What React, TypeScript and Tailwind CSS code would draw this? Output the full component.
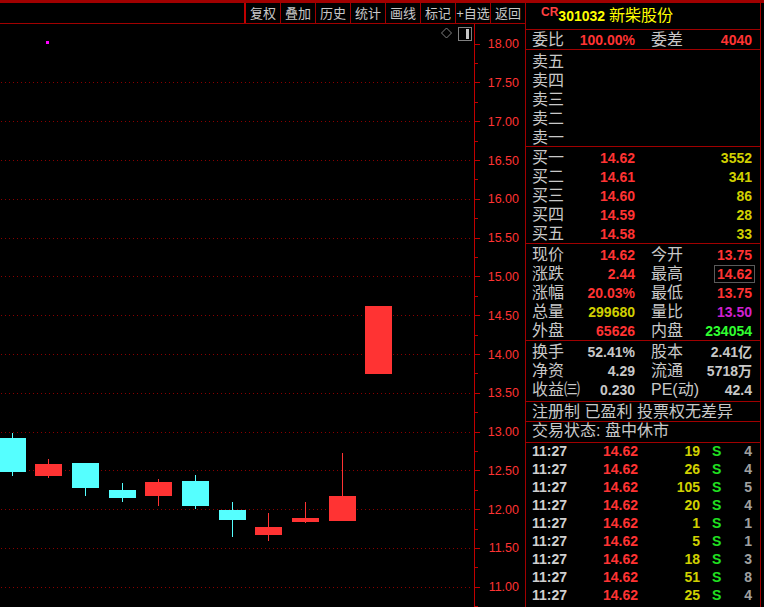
import React from "react"

const tools = ["复权", "叠加", "历史", "统计", "画线", "标记", "+自选", "返回"]

// page y of a price on the right axis
const py = (p: number) => 43.7 + (18 - p) * 77.58 - 24

const labels = Array.from({ length: 15 }, (_, i) => 18 - i * 0.5)
const minors = Array.from({ length: 15 }, (_, i) => 17.75 - i * 0.5)

// [x, bodyTop, bodyBottom, wickTop, wickBottom, up]
const candles: [number, number, number, number, number, boolean][] = [
  [-1, 438, 472, 433, 476, false],
  [35, 464, 476, 459, 478, true],
  [72, 463, 488, 463, 496, false],
  [109, 490, 498, 483, 502, false],
  [145, 482, 496, 479, 506, true],
  [182, 481, 506, 475, 509, false],
  [219, 510, 520, 502, 537, false],
  [255, 527, 535, 513, 541, true],
  [292, 518, 522, 502, 523, true],
  [329, 496, 521, 453, 521, true],
  [365, 306, 374, 306, 374, true],
]

const trades = [
  ["19", "4"],
  ["26", "4"],
  ["105", "5"],
  ["20", "4"],
  ["1", "1"],
  ["5", "1"],
  ["18", "3"],
  ["51", "8"],
  ["25", "4"],
]

function Chart() {
  return (
    <svg width={525} height={583} className="block">
      {labels.slice(1).map((p) => (
        <line
          key={p}
          x1={1}
          x2={473}
          y1={Math.round(py(p)) + 0.5}
          y2={Math.round(py(p)) + 0.5}
          stroke="#8a0000"
          strokeDasharray="1 3"
        />
      ))}
      <rect x={46} y={17} width={3} height={3} fill="#ff00ff" />
      {candles.map(([x, bt, bb, wt, wb, up], i) => {
        const c = up ? "#ff3333" : "#55ffff"
        return (
          <g key={i}>
            <rect x={x + 13} y={wt - 24} width={1} height={wb - wt} fill={c} />
            <rect x={x} y={bt - 24} width={27} height={bb - bt} fill={c} />
          </g>
        )
      })}
      {/* icons */}
      <path d="M446.5 4 L451.5 9 L446.5 14 L441.5 9 Z" fill="none" stroke="#808080" />
      <rect x={458.5} y={3.5} width={13} height={13} fill="none" stroke="#808080" />
      <rect x={466} y={5} width={3} height={10} fill="#c8c8c8" />
      {/* axis */}
      <rect x={474} y={0} width={1} height={583} fill="#c00000" />
      {labels.map((p) => (
        <g key={p}>
          <rect x={475} y={Math.round(py(p))} width={5} height={1} fill="#c00000" />
          <text
            x={519}
            y={py(p) + 4.5}
            textAnchor="end"
            fontFamily="Liberation Sans"
            fontSize={12.5}
            fill="#ff3333"
          >
            {p.toFixed(2)}
          </text>
        </g>
      ))}
      {minors.map((p) => (
        <rect key={p} x={475} y={Math.round(py(p))} width={3} height={1} fill="#c00000" />
      ))}
    </svg>
  )
}

function Pair({
  l1,
  v1,
  c1,
  l2,
  v2,
  c2,
  boxed,
}: {
  l1: string
  v1: string
  c1: string
  l2: string
  v2: string
  c2: string
  boxed?: boolean
}) {
  return (
    <div className="flex h-[19px] items-center">
      <div className="flex w-[109px] items-center justify-between pl-[6px]">
        <span className="text-[16px] text-[#c8c8c8]">{l1}</span>
        <span className={`text-[14px] font-bold ${c1}`}>{v1}</span>
      </div>
      <div className="ml-[16px] flex w-[101px] items-center justify-between">
        <span className="text-[16px] text-[#c8c8c8]">{l2}</span>
        {boxed ? (
          <span className={`-mr-[3px] border border-[#5a5a5a] px-[2px] text-[14px] leading-[16px] font-bold ${c2}`}>{v2}</span>
        ) : (
          <span className={`text-[14px] font-bold ${c2}`}>{v2}</span>
        )}
      </div>
    </div>
  )
}

function Book({ label, price, vol }: { label: string; price?: string; vol?: string }) {
  return (
    <div className="flex h-[19px] items-center">
      <div className="flex w-[109px] items-center justify-between pl-[6px]">
        <span className="text-[16px] text-[#c8c8c8]">{label}</span>
        <span className="text-[14px] font-bold text-[#ff3333]">{price}</span>
      </div>
      <span className="w-[117px] text-right text-[14px] font-bold text-[#d0d000]">{vol}</span>
    </div>
  )
}

export default function App() {
  return (
    <div className="relative h-[607px] w-[764px] overflow-hidden bg-black font-['Liberation_Sans','Noto_Sans_CJK_SC',sans-serif] leading-none">
      <div className="h-[3px] bg-[#a00000]" />
      <div className="flex">
        {/* chart side */}
        <div className="w-[525px]">
          <div className="flex h-[21px] justify-end border-b border-[#a00000]">
            <div className="flex w-[281px] border-l-2 border-[#c00000]">
              {tools.map((t, i) => (
                <div
                  key={t}
                  className={`flex flex-1 items-center justify-center text-[13px] text-[#c8c8c8] ${i < tools.length - 1 ? "border-r border-[#a00000]" : ""}`}
                >
                  {t}
                </div>
              ))}
            </div>
          </div>
          <Chart />
        </div>

        {/* quote panel */}
        <div className="h-[604px] w-[236px] border-x border-[#a00000]">
          <div className="flex h-[27px] items-center border-b border-[#a00000] pl-[15px]">
            <span className="-mt-[8px] text-[12px] font-bold text-[#ff4040]">CR</span>
            <span className="text-[14px] font-bold text-[#ffff00]">301032</span>
            <span className="ml-[4px] text-[16px] text-[#ffff00]">新柴股份</span>
          </div>
          <div className="flex h-[20px] items-center border-b border-[#a00000]">
            <Pair l1="委比" v1="100.00%" c1="text-[#ff3333]" l2="委差" v2="4040" c2="text-[#ff3333]" />
          </div>
          <div className="h-[97px] border-b border-[#a00000] pt-[2px]">
            {["卖五", "卖四", "卖三", "卖二", "卖一"].map((l) => (
              <Book key={l} label={l} />
            ))}
          </div>
          <div className="h-[97px] border-b border-[#a00000] pt-[1px]">
            <Book label="买一" price="14.62" vol="3552" />
            <Book label="买二" price="14.61" vol="341" />
            <Book label="买三" price="14.60" vol="86" />
            <Book label="买四" price="14.59" vol="28" />
            <Book label="买五" price="14.58" vol="33" />
          </div>
          <div className="h-[97px] border-b border-[#a00000] pt-[1px]">
            <Pair l1="现价" v1="14.62" c1="text-[#ff3333]" l2="今开" v2="13.75" c2="text-[#ff3333]" />
            <Pair l1="涨跌" v1="2.44" c1="text-[#ff3333]" l2="最高" v2="14.62" c2="text-[#ff3333]" boxed />
            <Pair l1="涨幅" v1="20.03%" c1="text-[#ff3333]" l2="最低" v2="13.75" c2="text-[#ff3333]" />
            <Pair l1="总量" v1="299680" c1="text-[#d0d000]" l2="量比" v2="13.50" c2="text-[#d020d0]" />
            <Pair l1="外盘" v1="65626" c1="text-[#ff3333]" l2="内盘" v2="234054" c2="text-[#30ff30]" />
          </div>
          <div className="h-[61px] border-b border-[#a00000] pt-[1px]">
            <Pair l1="换手" v1="52.41%" c1="text-[#c8c8c8]" l2="股本" v2="2.41亿" c2="text-[#c8c8c8]" />
            <Pair l1="净资" v1="4.29" c1="text-[#c8c8c8]" l2="流通" v2="5718万" c2="text-[#c8c8c8]" />
            <Pair l1="收益㈢" v1="0.230" c1="text-[#c8c8c8]" l2="PE(动)" v2="42.4" c2="text-[#c8c8c8]" />
          </div>
          <div className="flex h-[20px] items-center border-b border-[#a00000] pl-[6px] text-[16px] text-[#c8c8c8]">
            注册制 已盈利 投票权无差异
          </div>
          <div className="h-[21px] border-b border-[#a00000] pl-[6px] text-[16px] leading-[17px] text-[#c8c8c8]">
            交易状态: 盘中休市
          </div>
          <div className="-mt-[1px]">
            {trades.map(([v, n], i) => (
              <div key={i} className="flex h-[18px] items-center text-[14px] font-bold">
                <span className="w-[50px] pl-[6px] text-[#d0d0d0]">11:27</span>
                <span className="w-[62px] text-right text-[#ff3333]">14.62</span>
                <span className="w-[62px] text-right text-[#d0d000]">{v}</span>
                <span className="ml-[12px] w-[12px] text-[#20e020]">S</span>
                <span className="w-[28px] text-right text-[#a0a0a0]">{n}</span>
              </div>
            ))}
          </div>
        </div>
      </div>
    </div>
  )
}
